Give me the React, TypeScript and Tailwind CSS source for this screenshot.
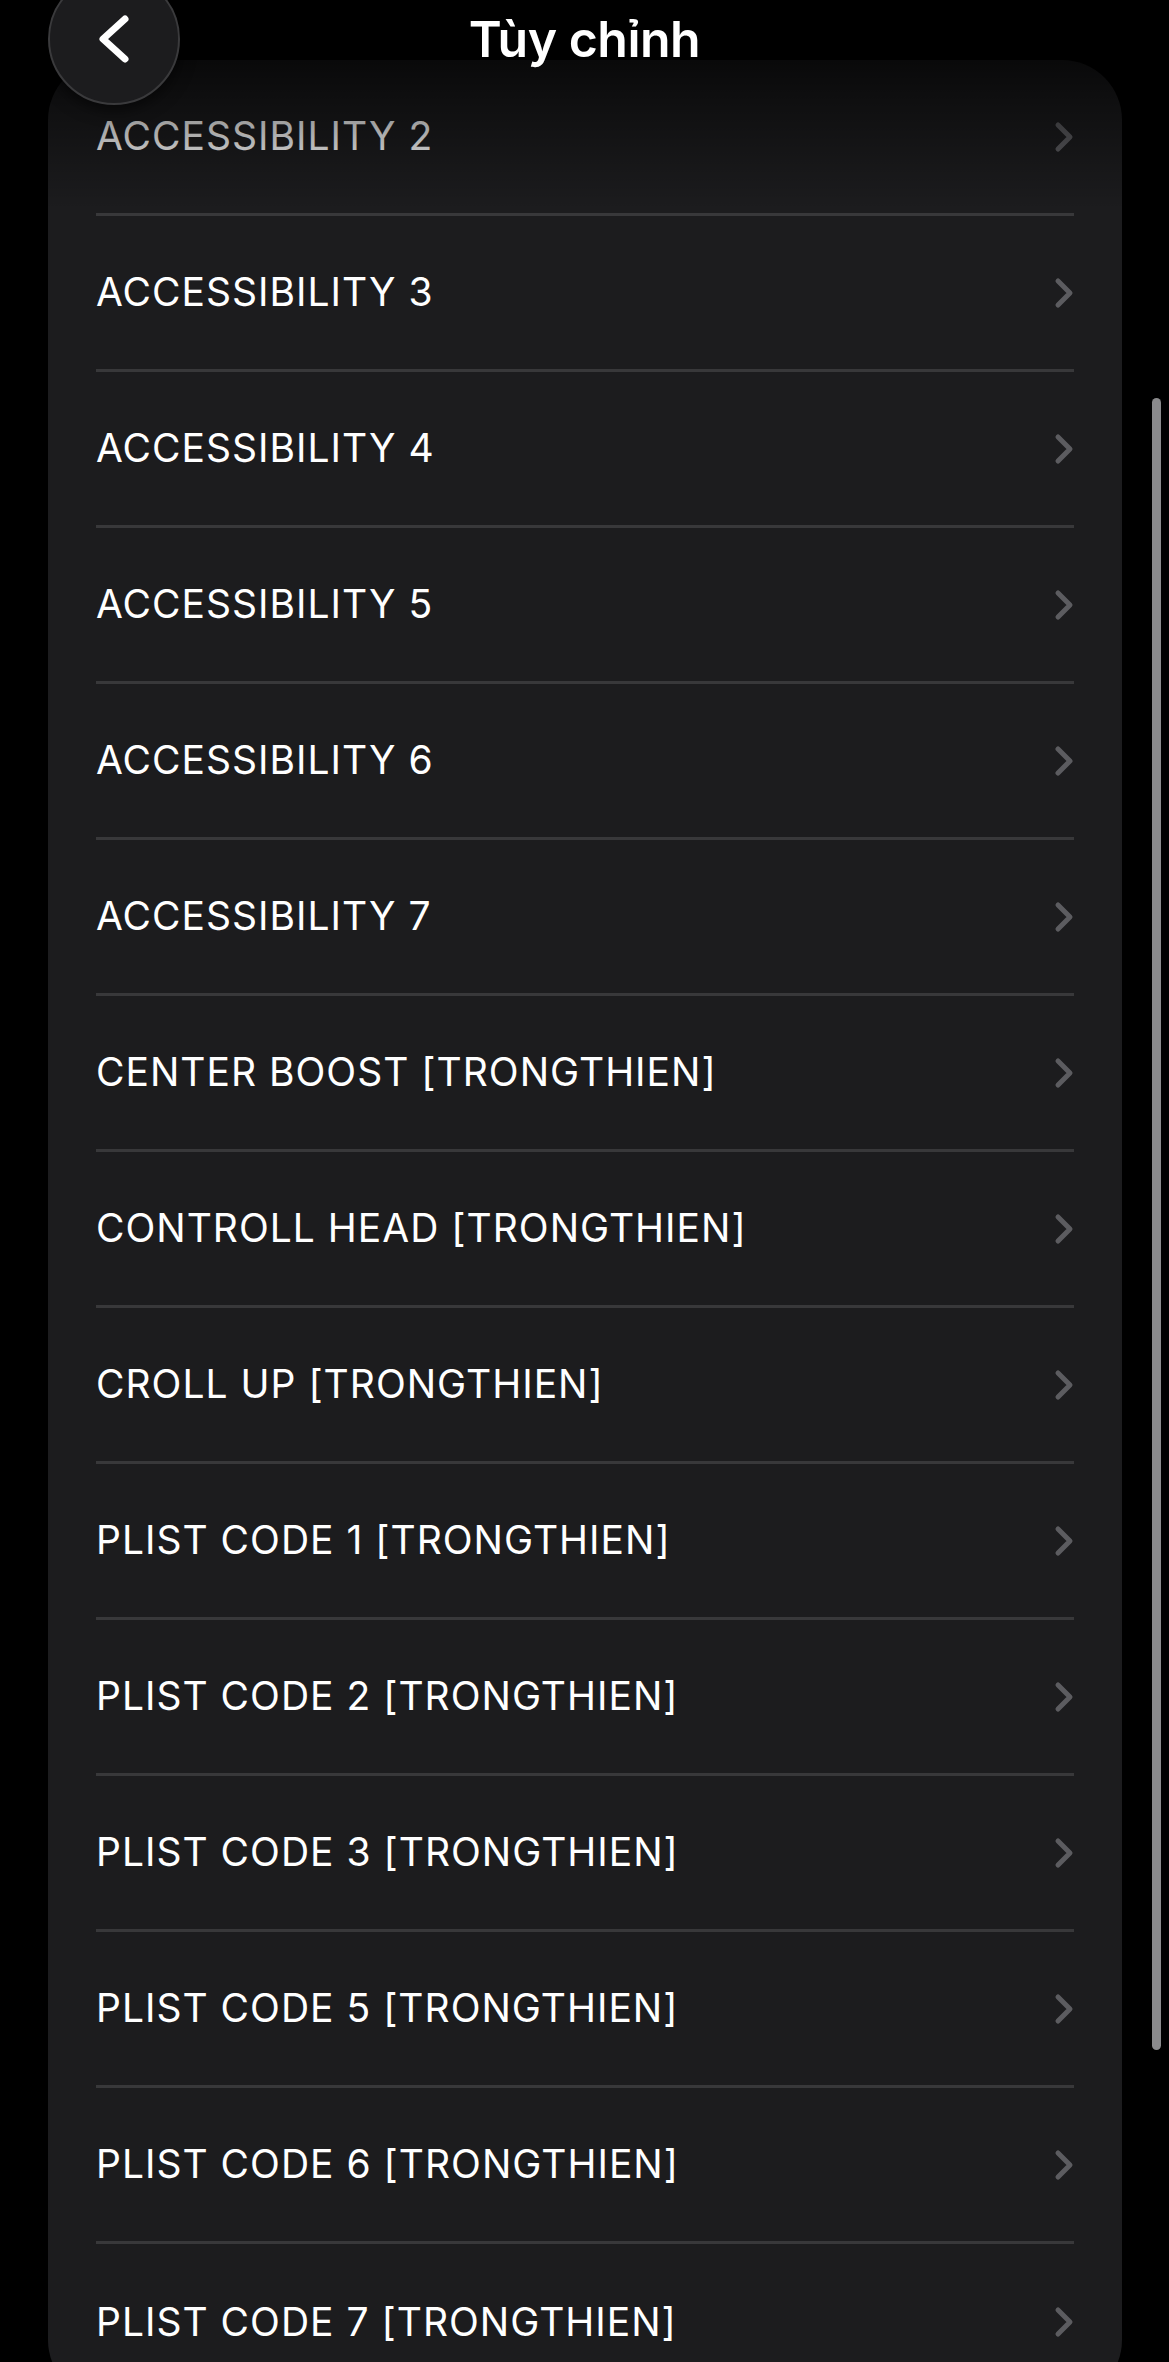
import React from "react";

const items: string[] = [
  "ACCESSIBILITY 2",
  "ACCESSIBILITY 3",
  "ACCESSIBILITY 4",
  "ACCESSIBILITY 5",
  "ACCESSIBILITY 6",
  "ACCESSIBILITY 7",
  "CENTER BOOST [TRONGTHIEN]",
  "CONTROLL HEAD [TRONGTHIEN]",
  "CROLL UP [TRONGTHIEN]",
  "PLIST CODE 1 [TRONGTHIEN]",
  "PLIST CODE 2 [TRONGTHIEN]",
  "PLIST CODE 3 [TRONGTHIEN]",
  "PLIST CODE 5 [TRONGTHIEN]",
  "PLIST CODE 6 [TRONGTHIEN]",
  "PLIST CODE 7 [TRONGTHIEN]",
];

function ChevronRight() {
  return (
    <svg width="20" height="32" viewBox="0 0 20 32" fill="none">
      <polyline
        points="4,4 16,16 4,28"
        stroke="#5c5c60"
        strokeWidth="5"
        strokeLinecap="round"
        strokeLinejoin="round"
      />
    </svg>
  );
}

function ChevronLeft() {
  return (
    <svg width="32" height="50" viewBox="0 0 32 50" fill="none">
      <polyline
        points="27,5 5,25 27,45"
        stroke="#ffffff"
        strokeWidth="7"
        strokeLinecap="round"
        strokeLinejoin="round"
      />
    </svg>
  );
}

export default function App() {
  return (
    <div
      className="relative h-[2362px] w-full overflow-hidden bg-black"
      style={{ fontFamily: "Inter, 'Noto Sans', sans-serif" }}
    >
      {/* List card */}
      <div className="ml-[48px] mr-[47px] mt-[60px] rounded-[60px] bg-[#1c1c1e] px-[48px]">
        {items.map((label, i) => (
          <div
            key={label}
            className={`flex h-[156px] items-center justify-between ${
              i < items.length - 1 ? "border-b-[3px] border-[#38383a]" : ""
            }`}
          >
            <span className="text-[39px] font-normal tracking-[1px] text-white">
              {label}
            </span>
            <ChevronRight />
          </div>
        ))}
      </div>

      {/* Top fade under header */}
      <div className="pointer-events-none absolute left-0 right-0 top-0 h-[210px] bg-gradient-to-b from-black via-black/45 to-transparent" />

      {/* Header */}
      <div className="absolute left-0 right-0 top-0 flex h-[78px] items-center justify-center">
        <div className="absolute left-[48px] top-[-27px] flex h-[132px] w-[132px] items-center justify-center rounded-full border-2 border-[#3a3a3c] bg-[#1c1c1e] shadow-[0_4px_16px_rgba(0,0,0,0.6)]">
          <ChevronLeft />
        </div>
        <h1 className="text-[50px] font-semibold tracking-[-0.5px] text-white">
          Tùy chỉnh
        </h1>
      </div>

      {/* Scroll indicator */}
      <div className="absolute right-[8px] top-[398px] h-[1652px] w-[9px] rounded-full bg-[#8a8a8c]" />
    </div>
  );
}
